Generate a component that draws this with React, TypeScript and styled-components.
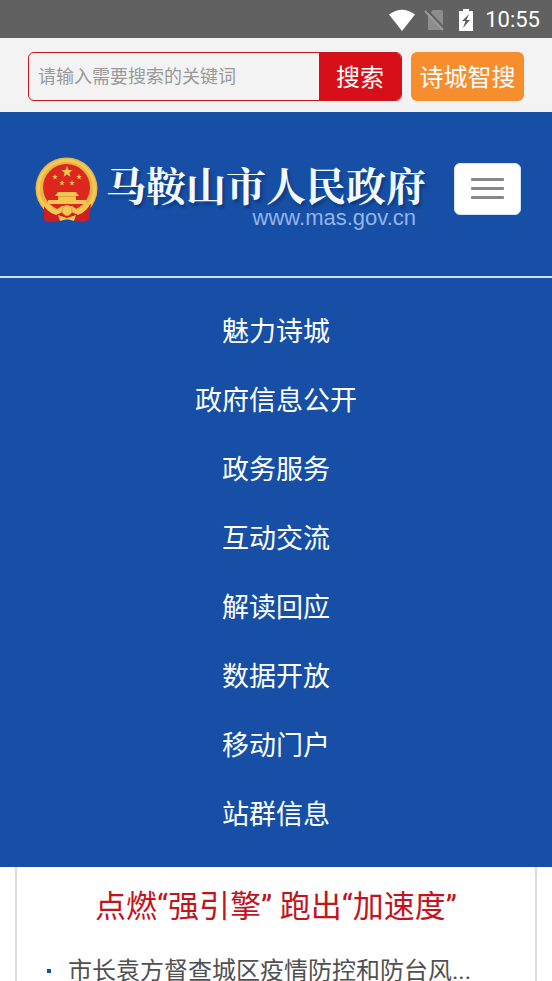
import React from "react";
import styled, { createGlobalStyle } from "styled-components";

const GlobalStyle = createGlobalStyle`
  * { box-sizing: border-box; }
  html, body { margin: 0; background: #fff; overflow-x: hidden; }
  body { font-family: Roboto, "Noto Sans CJK SC", sans-serif; }
  button, input { font-family: inherit; }
`;

const StatusBar = styled.div`
  display: flex;
  align-items: center;
  justify-content: flex-end;
  height: 38px;
  padding: 2px 12px 0 0;
  background: #616161;
  color: #fff;
`;

const StatusIcon = styled.svg<{ $gap: number }>`
  display: block;
  margin-right: ${(p) => p.$gap}px;
`;

const Clock = styled.time`
  font-size: 22px;
  line-height: 28px;
`;

const SearchStrip = styled.form`
  display: flex;
  gap: 9px;
  height: 74px;
  padding: 14px 28px 11px;
  background: #f3f3f3;
`;

const SearchBox = styled.div`
  display: flex;
  flex: 1;
  min-width: 0;
  border: 1px solid #c9151e;
  border-radius: 6px;
  overflow: hidden;
`;

const SearchInput = styled.input`
  flex: 1;
  min-width: 0;
  padding: 0 9px;
  border: 0;
  outline: 0;
  background: transparent;
  color: #444;
  font-size: 18px;
  &::placeholder { color: #999; opacity: 1; }
`;

const SearchButton = styled.button`
  width: 82px;
  padding: 0 0 3px;
  border: 0;
  background: #d60f18;
  color: #fff;
  font-size: 24px;
`;

const SmartButton = styled.button`
  width: 113px;
  padding: 0 0 3px;
  border: 0;
  border-radius: 6px;
  background: #f68e2e;
  color: #fff;
  font-size: 24px;
  white-space: nowrap;
`;

const Header = styled.header`
  display: flex;
  align-items: flex-start;
  justify-content: space-between;
  height: 166px;
  padding: 44px 31px 0 34px;
  border-bottom: 2px solid #d3dff0;
  background: #164fa5;
`;

const Brand = styled.a`
  display: flex;
  align-items: flex-start;
  color: #fff;
  text-decoration: none;
`;

const BrandText = styled.div`
  display: flex;
  flex-direction: column;
  align-items: flex-end;
  margin-left: 6px;
  padding-top: 4px;
`;

const BrandName = styled.span`
  font-family: "Noto Serif CJK SC", "Noto Sans CJK SC", serif;
  font-size: 40px;
  font-weight: 700;
  line-height: 48px;
  color: #f2f9ff;
  text-shadow: 2px 3px 3px rgba(5, 40, 100, 0.55);
  white-space: nowrap;
`;

const BrandUrl = styled.span`
  margin-right: 10px;
  font-family: "Liberation Sans", sans-serif;
  font-size: 22px;
  line-height: 20px;
  color: #92b5ea;
`;

const MenuButton = styled.button`
  display: flex;
  flex-direction: column;
  align-items: center;
  justify-content: center;
  gap: 6px;
  width: 67px;
  height: 52px;
  margin-top: 7px;
  padding: 0 0 2px;
  border: 1px solid #d5e4f8;
  border-radius: 6px;
  background: #fff;
`;

const MenuLine = styled.span`
  width: 33px;
  height: 3px;
  border-radius: 1px;
  background: #888;
`;

const Nav = styled.nav`
  padding: 20px 0 17px;
  background: #164fa5;
`;

const NavList = styled.ul`
  margin: 0;
  padding: 0;
  list-style: none;
`;

const NavLink = styled.a`
  display: block;
  color: #fff;
  font-size: 27px;
  line-height: 69px;
  text-align: center;
  text-decoration: none;
`;

const News = styled.main`
  margin: 0 15px;
  padding: 16px 30px 0;
  border: solid #ddd;
  border-width: 0 2px;
`;

const Headline = styled.h1`
  margin: 0;
  color: #c2141d;
  font-size: 31px;
  font-weight: 400;
  line-height: 48px;
  text-align: center;
  white-space: nowrap;
`;

const NewsList = styled.ul`
  margin: 18px 0 0;
  padding: 0;
  list-style: none;
`;

const NewsItem = styled.li`
  display: flex;
  align-items: center;
  gap: 17px;
  height: 44px;
  &::before {
    content: "";
    width: 4px;
    height: 4px;
    background: #164fa5;
  }
`;

const NewsLink = styled.a`
  color: #505050;
  font-size: 24px;
  line-height: 44px;
  text-decoration: none;
  white-space: nowrap;
`;

const Page = styled.div`
  height: 100vh;
  overflow: hidden;
`;

const star = (cx: number, cy: number, r: number) =>
  Array.from({ length: 10 }, (_, i) => {
    const a = -Math.PI / 2 + (i * Math.PI) / 5;
    const d = i % 2 ? r * 0.4 : r;
    return `${cx + d * Math.cos(a)},${cy + d * Math.sin(a)}`;
  }).join(" ");

const Emblem = () => (
  <svg width="66" height="68" viewBox="0 0 66 68" aria-hidden="true">
    <circle cx="32.5" cy="32.5" r="31" fill="#e9b440" />
    <circle cx="32.5" cy="32.5" r="28" fill="none" stroke="#f4c95c" strokeWidth="3" />
    <circle cx="32.5" cy="31.5" r="23.5" fill="#dc2720" />
    <path d="M10 48L22 54L33 56L44 54L57 48L55 63Q50 68 43 65L33 63L23 65Q15 68 10 64Z" fill="#d01d20" />
    <g fill="#f5c650">
      <polygon points={star(33, 16, 6)} />
      <polygon points={star(21, 21, 3)} />
      <polygon points={star(45, 21, 3)} />
      <polygon points={star(28, 27, 3)} />
      <polygon points={star(38, 27, 3)} />
      <path d="M24 36h18l3 4h-3v4h10v4H14v-4h10v-4h-3z" />
      <path d="M8 46Q16 48 22 54L28 50H38L44 54Q50 48 57 46Q53 56 44 59L33 54L22 59Q12 56 8 46Z" />
      <path d="M24 59l9 3 9-3-2 6-7-2-7 2z" />
    </g>
    <path d="M24 40.5h18" stroke="#dda039" strokeWidth="1" />
    <circle cx="33" cy="54.5" r="5" fill="#f2c657" stroke="#dda039" />
  </svg>
);

const links = ["魅力诗城", "政府信息公开", "政务服务", "互动交流", "解读回应", "数据开放", "移动门户", "站群信息"];
const news = ["市长袁方督查城区疫情防控和防台风..."];

export default function App() {
  return (
    <Page>
      <GlobalStyle />
      <StatusBar>
        <StatusIcon $gap={8} width="28" height="22" viewBox="0 0 28 22" aria-hidden="true">
          <path d="M1 5.5Q14-4 27 5.5L14 22Z" fill="#fff" />
        </StatusIcon>
        <StatusIcon $gap={13} width="21" height="22" viewBox="0 0 21 22" aria-hidden="true">
          <path d="M9 1h8q2 0 2 2v18H4V6Z" fill="#8d8d8d" />
          <path d="M3 1l18 19" stroke="#616161" strokeWidth="2" />
          <path d="M1 2l18 19" stroke="#999" strokeWidth="2" />
        </StatusIcon>
        <StatusIcon $gap={11} width="16" height="22" viewBox="0 0 16 22" aria-hidden="true">
          <path d="M5 0h6v2h4v20H1V2h4z" fill="#fff" />
          <path d="M11 5L4 12h3.5L5 19l7-8H8.5z" fill="#616161" />
        </StatusIcon>
        <Clock>10:55</Clock>
      </StatusBar>
      <SearchStrip onSubmit={(e) => e.preventDefault()}>
        <SearchBox>
          <SearchInput aria-label="请输入需要搜索的关键词" placeholder="请输入需要搜索的关键词" />
          <SearchButton type="submit">搜索</SearchButton>
        </SearchBox>
        <SmartButton type="button">诗城智搜</SmartButton>
      </SearchStrip>
      <Header>
        <Brand href="#">
          <Emblem />
          <BrandText>
            <BrandName>马鞍山市人民政府</BrandName>
            <BrandUrl>www.mas.gov.cn</BrandUrl>
          </BrandText>
        </Brand>
        <MenuButton type="button" aria-label="菜单">
          <MenuLine />
          <MenuLine />
          <MenuLine />
        </MenuButton>
      </Header>
      <Nav>
        <NavList>
          {links.map((label) => (
            <li key={label}>
              <NavLink href="#">{label}</NavLink>
            </li>
          ))}
        </NavList>
      </Nav>
      <News>
        <Headline>点燃“强引擎” 跑出“加速度”</Headline>
        <NewsList>
          {news.map((title) => (
            <NewsItem key={title}>
              <NewsLink href="#">{title}</NewsLink>
            </NewsItem>
          ))}
        </NewsList>
      </News>
    </Page>
  );
}
